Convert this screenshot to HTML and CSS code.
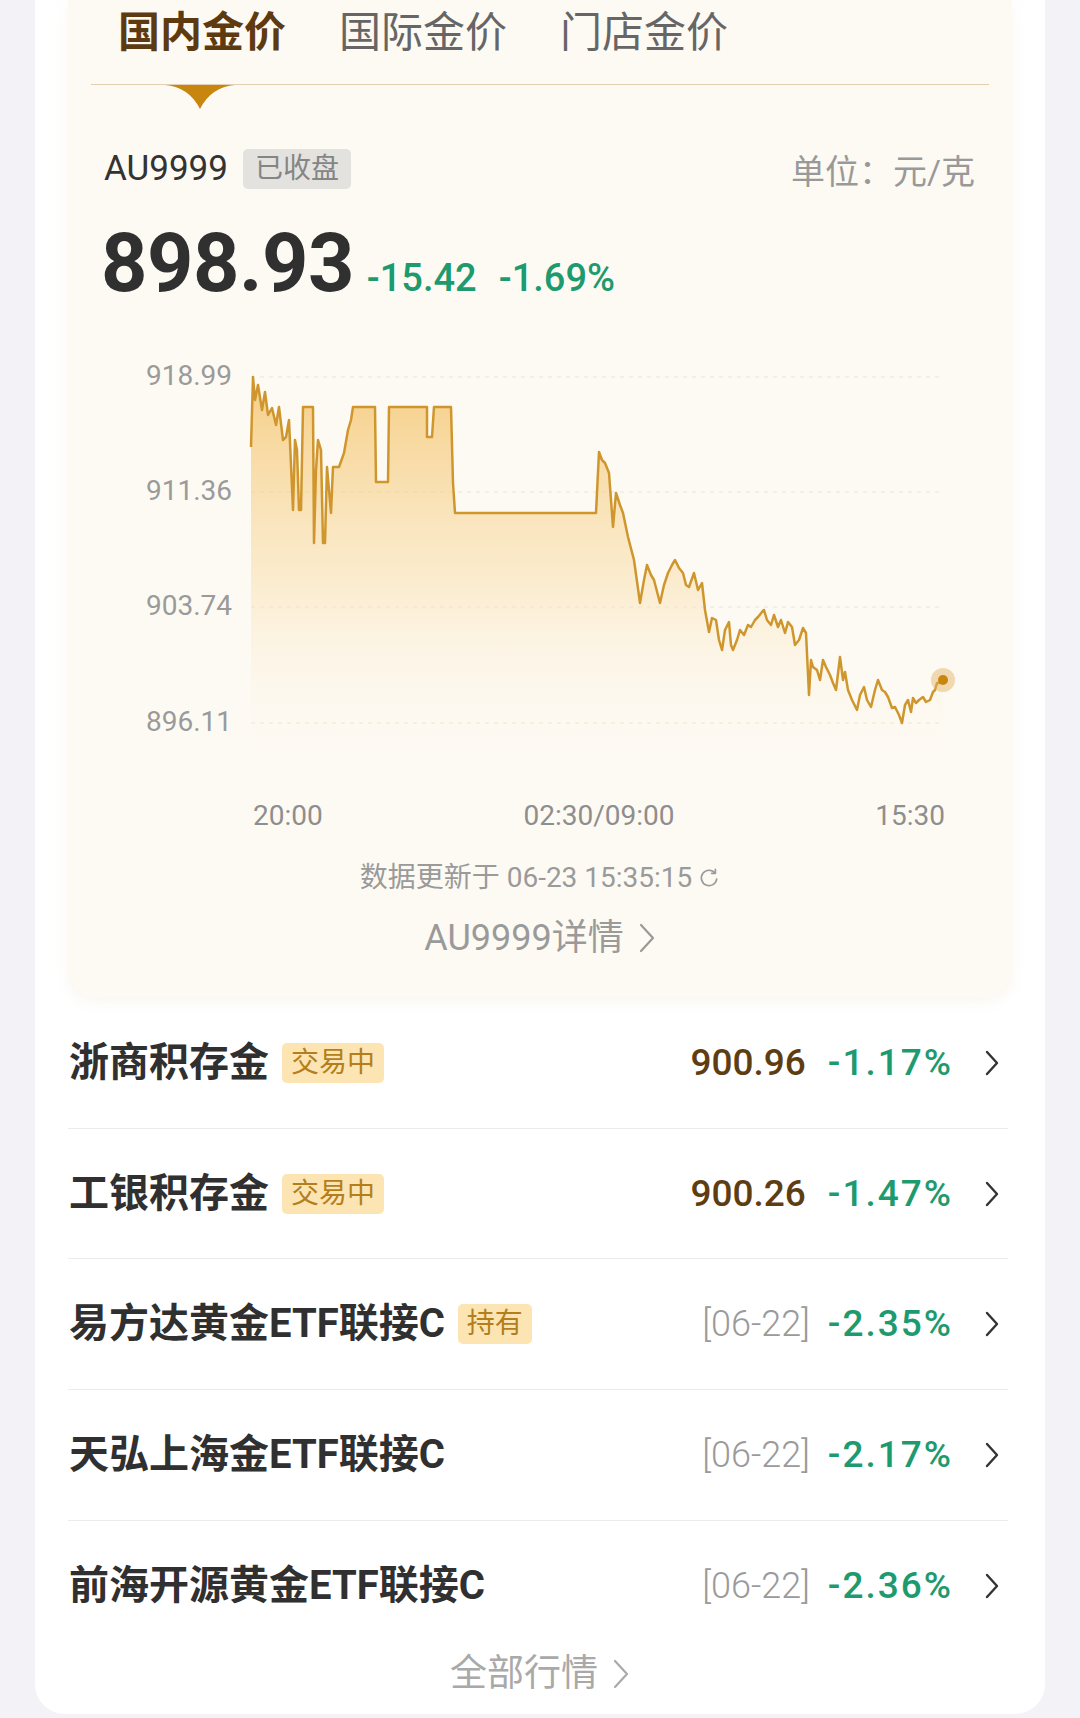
FILE: index.html
```html
<!DOCTYPE html>
<html lang="zh-CN">
<head>
<meta charset="utf-8">
<title>金价</title>
<link rel="stylesheet" href="styles.css">
</head>
<body>
<div class="card">
  <section class="panel">
    <nav class="tabs">
      <span class="tab active">国内金价<svg class="tab-arrow" viewBox="0 0 70 24" width="70" height="24"><path d="M0 0 L70 0 Q46 2 35 24 Q24 2 0 0 Z" fill="#c8860f"/></svg></span>
      <span class="tab">国际金价</span>
      <span class="tab">门店金价</span>
    </nav>
    <div class="info">
      <div class="info-left">
        <span class="code">AU9999</span>
        <span class="closed">已收盘</span>
      </div>
      <span class="unit">单位：元/克</span>
    </div>
    <div class="price">
      <span class="price-main">898.93</span>
      <span class="price-chg">-15.42</span>
      <span class="price-chg">-1.69%</span>
    </div>
    <svg class="chart" viewBox="0 0 944 500" width="944" height="500">
      <defs>
        <linearGradient id="fillg" x1="0" y1="37" x2="0" y2="420" gradientUnits="userSpaceOnUse">
          <stop offset="0" stop-color="#f4c36a" stop-opacity="0.8"/>
          <stop offset="0.55" stop-color="#f8dca6" stop-opacity="0.45"/>
          <stop offset="1" stop-color="#fdf8ee" stop-opacity="0"/>
        </linearGradient>
      </defs>
      <g class="grid">
        <line x1="183" y1="37" x2="875" y2="37"/>
        <line x1="183" y1="152" x2="875" y2="152"/>
        <line x1="183" y1="267" x2="875" y2="267"/>
        <line x1="183" y1="383" x2="875" y2="383"/>
      </g>
      <g class="ylab">
        <text x="164" y="45">918.99</text>
        <text x="164" y="160">911.36</text>
        <text x="164" y="275">903.74</text>
        <text x="164" y="391">896.11</text>
      </g>
      <path class="area" d="M183 107 L185 37 L187 60 L190 45 L194 70 L197 52 L200 75 L204 68 L208 85 L211 67 L215 100 L218 97 L221 80 L225 170 L227 100 L229 110 L231 170 L233 170 L235 67 L245 67 L246 203 L248 130 L250 100 L253 110 L255 203 L257 203 L259 127 L263 173 L265 127 L271 127 L276 113 L280 90 L283 80 L285 67 L307 67 L308 142 L320 142 L321 67 L359 67 L359 97 L364 97 L366 67 L383 67 L385 143 L387 173 L528 173 L531 112 L534 120 L537 123 L541 133 L545 187 L548 153 L552 165 L555 173 L560 197 L566 220 L572 263 L576 240 L579 225 L583 235 L586 240 L592 263 L596 245 L600 233 L604 225 L607 220 L611 228 L615 233 L618 245 L621 247 L626 233 L630 250 L634 243 L637 270 L641 292 L644 278 L648 280 L651 300 L654 310 L657 290 L661 282 L663 305 L665 310 L669 300 L672 290 L676 295 L680 285 L683 287 L687 280 L690 277 L694 272 L696 270 L699 280 L703 285 L706 275 L710 287 L713 280 L717 293 L720 282 L724 287 L727 305 L731 300 L735 288 L738 293 L741 355 L743 320 L745 327 L749 330 L752 340 L755 320 L758 327 L762 335 L765 343 L768 350 L772 317 L775 340 L777 332 L780 350 L784 360 L789 370 L792 355 L796 347 L799 360 L803 367 L807 350 L810 340 L814 350 L817 352 L820 357 L824 368 L827 367 L831 375 L834 383 L837 365 L840 360 L843 372 L845 358 L848 363 L851 360 L855 357 L858 362 L862 360 L865 352 L867 350 L869 343 L872 343 L875 340 L875 420 L183 420 Z" fill="url(#fillg)"/>
      <path class="line" d="M183 107 L185 37 L187 60 L190 45 L194 70 L197 52 L200 75 L204 68 L208 85 L211 67 L215 100 L218 97 L221 80 L225 170 L227 100 L229 110 L231 170 L233 170 L235 67 L245 67 L246 203 L248 130 L250 100 L253 110 L255 203 L257 203 L259 127 L263 173 L265 127 L271 127 L276 113 L280 90 L283 80 L285 67 L307 67 L308 142 L320 142 L321 67 L359 67 L359 97 L364 97 L366 67 L383 67 L385 143 L387 173 L528 173 L531 112 L534 120 L537 123 L541 133 L545 187 L548 153 L552 165 L555 173 L560 197 L566 220 L572 263 L576 240 L579 225 L583 235 L586 240 L592 263 L596 245 L600 233 L604 225 L607 220 L611 228 L615 233 L618 245 L621 247 L626 233 L630 250 L634 243 L637 270 L641 292 L644 278 L648 280 L651 300 L654 310 L657 290 L661 282 L663 305 L665 310 L669 300 L672 290 L676 295 L680 285 L683 287 L687 280 L690 277 L694 272 L696 270 L699 280 L703 285 L706 275 L710 287 L713 280 L717 293 L720 282 L724 287 L727 305 L731 300 L735 288 L738 293 L741 355 L743 320 L745 327 L749 330 L752 340 L755 320 L758 327 L762 335 L765 343 L768 350 L772 317 L775 340 L777 332 L780 350 L784 360 L789 370 L792 355 L796 347 L799 360 L803 367 L807 350 L810 340 L814 350 L817 352 L820 357 L824 368 L827 367 L831 375 L834 383 L837 365 L840 360 L843 372 L845 358 L848 363 L851 360 L855 357 L858 362 L862 360 L865 352 L867 350 L869 343 L872 343 L875 340"/>
      <circle cx="875" cy="340" r="12" fill="#e0b060" fill-opacity="0.45"/>
      <circle cx="875" cy="340" r="5" fill="#c8860f"/>
      <g class="xlab">
        <text x="185" y="485" text-anchor="start">20:00</text>
        <text x="531" y="485" text-anchor="middle">02:30/09:00</text>
        <text x="877" y="485" text-anchor="end">15:30</text>
      </g>
    </svg>
    <div class="update">数据更新于 06-23 15:35:15<svg class="refresh" viewBox="0 0 20 20" width="22" height="22"><path d="M15.5 5.5 A7 7 0 1 0 17 11" fill="none" stroke="#999" stroke-width="1.5" stroke-linecap="round"/><path d="M15.8 2.2 L15.8 5.8 L12.4 5.8" fill="none" stroke="#999" stroke-width="1.5" stroke-linecap="round" stroke-linejoin="round"/></svg></div>
    <div class="detail">AU9999详情<svg class="chev-gray" viewBox="0 0 18 30" width="18" height="30"><path d="M3 2 L15 15 L3 28" fill="none" stroke="#999" stroke-width="2.2" stroke-linecap="round" stroke-linejoin="round"/></svg></div>
  </section>

  <ul class="list">
    <li class="row">
      <div class="row-left"><span class="name">浙商积存金</span><span class="tag">交易中</span></div>
      <div class="row-right"><span class="val">900.96</span><span class="pct">-1.17%</span><svg class="chev" viewBox="0 0 16 28" width="16" height="28"><path d="M3 3 L13 14 L3 25" fill="none" stroke="#333" stroke-width="2.4" stroke-linecap="round" stroke-linejoin="round"/></svg></div>
    </li>
    <li class="row">
      <div class="row-left"><span class="name">工银积存金</span><span class="tag">交易中</span></div>
      <div class="row-right"><span class="val">900.26</span><span class="pct">-1.47%</span><svg class="chev" viewBox="0 0 16 28" width="16" height="28"><path d="M3 3 L13 14 L3 25" fill="none" stroke="#333" stroke-width="2.4" stroke-linecap="round" stroke-linejoin="round"/></svg></div>
    </li>
    <li class="row">
      <div class="row-left"><span class="name">易方达黄金ETF联接C</span><span class="tag">持有</span></div>
      <div class="row-right"><span class="date">[06-22]</span><span class="pct">-2.35%</span><svg class="chev" viewBox="0 0 16 28" width="16" height="28"><path d="M3 3 L13 14 L3 25" fill="none" stroke="#333" stroke-width="2.4" stroke-linecap="round" stroke-linejoin="round"/></svg></div>
    </li>
    <li class="row">
      <div class="row-left"><span class="name">天弘上海金ETF联接C</span></div>
      <div class="row-right"><span class="date">[06-22]</span><span class="pct">-2.17%</span><svg class="chev" viewBox="0 0 16 28" width="16" height="28"><path d="M3 3 L13 14 L3 25" fill="none" stroke="#333" stroke-width="2.4" stroke-linecap="round" stroke-linejoin="round"/></svg></div>
    </li>
    <li class="row last">
      <div class="row-left"><span class="name">前海开源黄金ETF联接C</span></div>
      <div class="row-right"><span class="date">[06-22]</span><span class="pct">-2.36%</span><svg class="chev" viewBox="0 0 16 28" width="16" height="28"><path d="M3 3 L13 14 L3 25" fill="none" stroke="#333" stroke-width="2.4" stroke-linecap="round" stroke-linejoin="round"/></svg></div>
    </li>
  </ul>
  <div class="more">全部行情<svg class="chev-gray" viewBox="0 0 18 30" width="18" height="30"><path d="M3 2 L15 15 L3 28" fill="none" stroke="#aaa" stroke-width="2.2" stroke-linecap="round" stroke-linejoin="round"/></svg></div>
</div>
</body>
</html>
```

FILE: styles.css
```css
* { box-sizing: border-box; }
html, body { margin: 0; padding: 0; }
body {
  background: #f3f3f7;
  font-family: Roboto, "Noto Sans CJK SC", sans-serif;
  color: #333;
  width: 1080px;
  height: 1718px;
  overflow: hidden;
}
.card {
  margin: 0 35px;
  background: #ffffff;
  border-radius: 0 0 30px 30px;
  padding: 0 0 25px;
  height: 1714px;
}
.panel {
  margin: 0 33px;
  background: #fdfaf3;
  border-radius: 0 0 26px 26px;
  box-shadow: 0 6px 14px rgba(214, 196, 160, 0.14);
  padding-bottom: 36px;
}
.tabs {
  margin: 0 23px;
  height: 85px;
  border-bottom: 1px solid #e3cfb2;
  display: flex;
  align-items: flex-start;
  gap: 53px;
  padding-left: 27px;
}
.tab {
  position: relative;
  font-family: "Noto Sans CJK SC", sans-serif;
  font-size: 42px;
  line-height: 58px;
  color: #666;
}
.tab.active {
  color: #5d3a10;
  font-weight: 700;
}
.tab-arrow {
  position: absolute;
  left: 50%;
  top: 85px;
  margin-left: -37px;
  display: block;
}
.info {
  margin-top: 64px;
  height: 40px;
  padding: 0 37px 0 36px;
  display: flex;
  align-items: center;
  justify-content: space-between;
}
.info-left {
  display: flex;
  align-items: center;
  gap: 15px;
}
.code {
  font-size: 35px;
  line-height: 40px;
  color: #333;
}
.closed {
  background: #e3e2df;
  color: #858585;
  font-size: 28px;
  line-height: 40px;
  height: 40px;
  padding: 0 12px;
  border-radius: 5px;
}
.unit {
  font-size: 34px;
  line-height: 40px;
  color: #999;
  padding-top: 6px;
}
.price {
  margin-top: 34px;
  padding-left: 33px;
  display: flex;
  align-items: baseline;
  height: 82px;
}
.price-main {
  font-size: 81px;
  line-height: 82px;
  font-weight: 700;
  color: #303030;
  letter-spacing: -0.5px;
  margin-right: 13px;
}
.price-chg {
  font-size: 38px;
  line-height: 82px;
  color: #1e9a6f;
  font-weight: 500;
  margin-right: 22px;
}
.chart {
  display: block;
  margin-top: 35px;
}
.grid line {
  stroke: #ebe4d6;
  stroke-width: 1.2;
  stroke-dasharray: 4 5;
}
.ylab text {
  font-family: Roboto, sans-serif;
  font-size: 28px;
  fill: #9a9a9a;
  text-anchor: end;
}
.xlab text {
  font-family: Roboto, sans-serif;
  font-size: 28px;
  fill: #8e8e8e;
}
.line {
  fill: none;
  stroke: #d0962e;
  stroke-width: 2.5;
  stroke-linejoin: round;
}
.update {
  margin-top: 20px;
  display: flex;
  justify-content: center;
  align-items: center;
  font-size: 28px;
  line-height: 36px;
  color: #9a9a9a;
}
.refresh {
  margin-left: 6px;
}
.detail {
  margin-top: 20px;
  display: flex;
  justify-content: center;
  align-items: center;
  font-size: 36px;
  line-height: 44px;
  color: #9a9a9a;
}
.chev-gray {
  margin-left: 14px;
}
.list {
  list-style: none;
  margin: 2px 37px 0 33px;
  padding: 0;
}
.row {
  height: 130.7px;
  border-bottom: 1px solid #ececec;
  display: flex;
  align-items: center;
  justify-content: space-between;
  padding: 0 8px 0 1px;
}
.row.last {
  border-bottom: none;
}
.row-left {
  display: flex;
  align-items: center;
  gap: 13px;
}
.name {
  font-family: Roboto, "Noto Sans CJK SC", sans-serif;
  font-size: 40px;
  line-height: 48px;
  font-weight: 700;
  color: #303030;
}
.tag {
  background: #fce5b3;
  color: #b47e1c;
  font-size: 28px;
  line-height: 40px;
  height: 40px;
  padding: 0 9px;
  border-radius: 5px;
}
.row-right {
  display: flex;
  align-items: center;
}
.val {
  font-size: 37px;
  line-height: 48px;
  color: #5e3d12;
  font-weight: 500;
  margin-right: 22px;
}
.date {
  font-size: 36px;
  line-height: 48px;
  color: #9a9a9a;
  font-weight: 300;
  margin-right: 18px;
}
.pct {
  font-size: 37px;
  line-height: 48px;
  color: #1e9a6f;
  font-weight: 500;
  margin-right: 31px;
  letter-spacing: 2px;
}
.chev {
  display: block;
}
.more {
  margin-top: 3px;
  display: flex;
  justify-content: center;
  align-items: center;
  font-size: 37px;
  line-height: 40px;
  color: #a9a9a9;
}
```
